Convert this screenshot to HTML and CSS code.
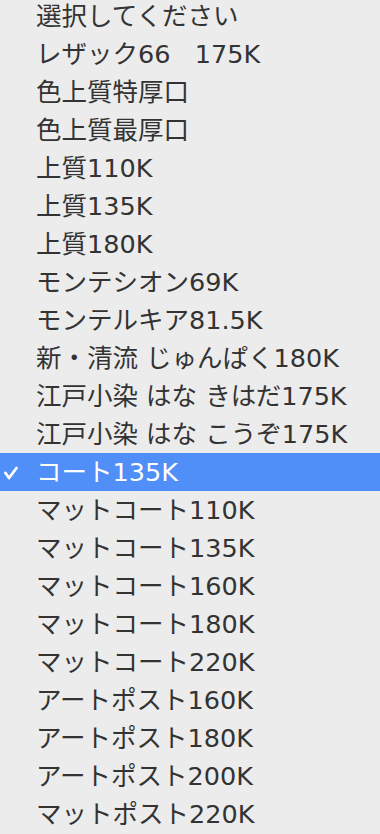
FILE: index.html
```html
<!DOCTYPE html>
<html lang="ja">

<head>
    <meta charset="UTF-8">
    <meta name="viewport" content="width=device-width, initial-scale=1.0">
    <title>用紙選択</title>
    <link rel="stylesheet" href="styles.css">
</head>

<body>
    <ul class="menu">
        <li class="item">選択してください</li>
        <li class="item">レザック66&nbsp;&nbsp;&nbsp;175K</li>
        <li class="item">色上質特厚口</li>
        <li class="item">色上質最厚口</li>
        <li class="item">上質110K</li>
        <li class="item">上質135K</li>
        <li class="item">上質180K</li>
        <li class="item">モンテシオン69K</li>
        <li class="item">モンテルキア81.5K</li>
        <li class="item">新・清流 じゅんぱく180K</li>
        <li class="item">江戸小染 はな きはだ175K</li>
        <li class="item">江戸小染 はな こうぞ175K</li>
        <li class="item selected">
            <svg class="check" width="16" height="14" viewBox="0 0 16 14">
                <path d="M1.5 7 L5 12 L12.5 2" fill="none" stroke="#fff" stroke-width="2.8" stroke-linecap="round" stroke-linejoin="round"/>
            </svg>
            コート135K
        </li>
        <li class="item">マットコート110K</li>
        <li class="item">マットコート135K</li>
        <li class="item">マットコート160K</li>
        <li class="item">マットコート180K</li>
        <li class="item">マットコート220K</li>
        <li class="item">アートポスト160K</li>
        <li class="item">アートポスト180K</li>
        <li class="item">アートポスト200K</li>
        <li class="item">マットポスト220K</li>
    </ul>
</body>

</html>
```

FILE: styles.css
```css
* {
    box-sizing: border-box;
}

html,
body {
    margin: 0;
    background-color: #ececec;
}

.menu {
    list-style: none;
    margin: -3px 0 0 0;
    padding: 0;
    font-family: "DejaVu Sans", "Noto Sans CJK JP", sans-serif;
    font-size: 25.5px;
    color: #333333;
}

.item {
    position: relative;
    height: 38px;
    line-height: 38px;
    padding-left: 36px;
    white-space: nowrap;
}

.selected {
    background-color: #4f8ff7;
    color: white;
}

.check {
    position: absolute;
    left: 4px;
    top: 13px;
}
```
